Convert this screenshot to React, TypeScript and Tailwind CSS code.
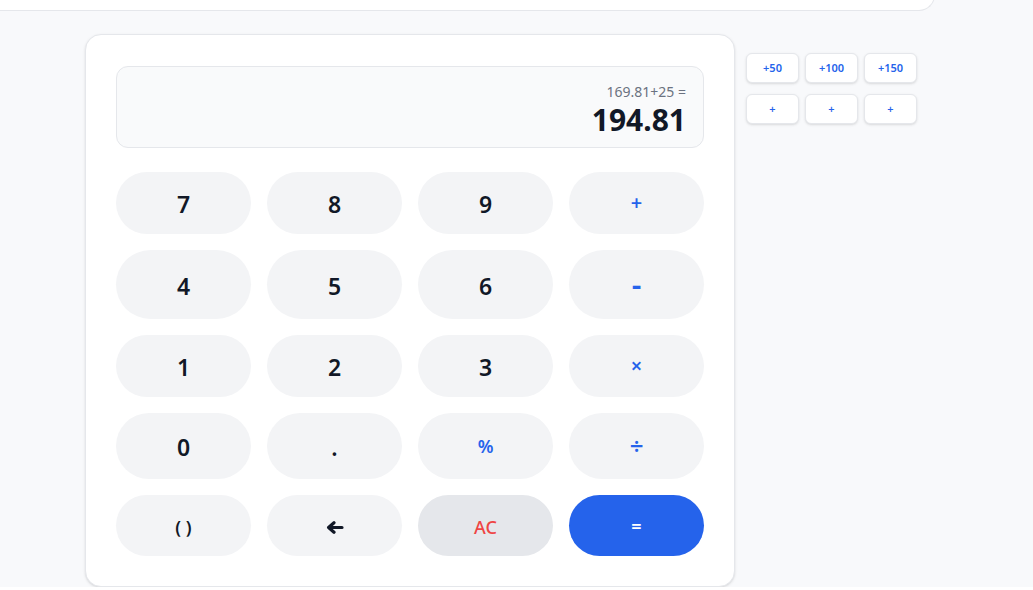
type Key = {
  label: string;
  kind: 'num' | 'op' | 'clear' | 'equals';
  size?: string;
};

const rows: { height: string; keys: Key[] }[] = [
  {
    height: 'h-[62px]',
    keys: [
      { label: '7', kind: 'num' },
      { label: '8', kind: 'num' },
      { label: '9', kind: 'num' },
      { label: '+', kind: 'op', size: 'text-xl' },
    ],
  },
  {
    height: 'h-[69px]',
    keys: [
      { label: '4', kind: 'num' },
      { label: '5', kind: 'num' },
      { label: '6', kind: 'num' },
      { label: '-', kind: 'op', size: 'text-3xl' },
    ],
  },
  {
    height: 'h-[62px]',
    keys: [
      { label: '1', kind: 'num' },
      { label: '2', kind: 'num' },
      { label: '3', kind: 'num' },
      { label: '×', kind: 'op', size: 'text-xl' },
    ],
  },
  {
    height: 'h-[66px]',
    keys: [
      { label: '0', kind: 'num' },
      { label: '.', kind: 'num' },
      { label: '%', kind: 'op', size: 'text-lg' },
      { label: '÷', kind: 'op', size: 'text-2xl' },
    ],
  },
  {
    height: 'h-[61px]',
    keys: [
      { label: '( )', kind: 'num', size: 'text-lg' },
      { label: 'back', kind: 'num' },
      { label: 'AC', kind: 'clear' },
      { label: '=', kind: 'equals' },
    ],
  },
];

const quickAdds = ['+50', '+100', '+150', '+', '+', '+'];

function keyClass(k: Key) {
  switch (k.kind) {
    case 'op':
      return `bg-[#f3f4f6] text-[#2563eb] font-semibold ${k.size ?? 'text-xl'}`;
    case 'clear':
      return 'bg-[#e5e7eb] text-[#ef4444] font-medium text-lg pt-[2px]';
    case 'equals':
      return 'bg-[#2563eb] text-white font-semibold text-lg';
    default:
      return `bg-[#f3f4f6] text-[#111827] font-semibold pt-[3px] ${k.size ?? 'text-[23px]'}`;
  }
}

function BackArrow() {
  return (
    <svg width="18" height="13" viewBox="0 0 18 13" fill="none" className="text-[#111827]">
      <path
        d="M16 6.5H3.5M8 1.8L2.6 6.5 8 11.2"
        stroke="currentColor"
        strokeWidth="3.2"
        strokeLinecap="round"
        strokeLinejoin="round"
      />
    </svg>
  );
}

export default function App() {
  return (
    <div
      className="min-h-screen bg-[#f8f9fb]"
      style={{ fontFamily: '"Noto Sans", "Open Sans", sans-serif' }}
    >
      {/* Header card, mostly scrolled out of view */}
      <div className="-mt-[30px] h-[41px] w-[935px] rounded-br-2xl border-b border-r border-[#e5e7eb] bg-white" />

      <div className="flex items-start gap-[11px] pl-[85px] pt-[23px]">
        {/* Calculator */}
        <div className="w-[650px] rounded-2xl border border-[#e5e7eb] bg-white px-[30px] pb-[30px] pt-[31px] shadow-sm">
          <div className="mb-6 flex h-[82px] flex-col items-end justify-center rounded-xl border border-[#e5e7eb] bg-[#f9fafb] pr-[17px] pt-[5px]">
            <div className="text-sm leading-5 text-[#6b7280]">169.81+25 =</div>
            <div className="text-3xl font-bold leading-9 text-[#111827]">194.81</div>
          </div>

          <div className="flex flex-col gap-4">
            {rows.map((row, ri) => (
              <div key={ri} className="grid grid-cols-4 gap-4">
                {row.keys.map((k, ki) => (
                  <button
                    key={ki}
                    className={`flex ${row.height} items-center justify-center rounded-full ${keyClass(k)}`}
                  >
                    {k.label === 'back' ? <BackArrow /> : k.label}
                  </button>
                ))}
              </div>
            ))}
          </div>
        </div>

        {/* Quick add buttons */}
        <div className="mt-[19px] grid grid-cols-3 gap-x-[6px] gap-y-[11px]">
          {quickAdds.map((q, i) => (
            <button
              key={i}
              className="h-[30px] w-[53px] rounded-md border border-[#e5e7eb] bg-white text-[11px] font-semibold text-[#2563eb] shadow-sm"
            >
              {q}
            </button>
          ))}
        </div>
      </div>
    </div>
  );
}
